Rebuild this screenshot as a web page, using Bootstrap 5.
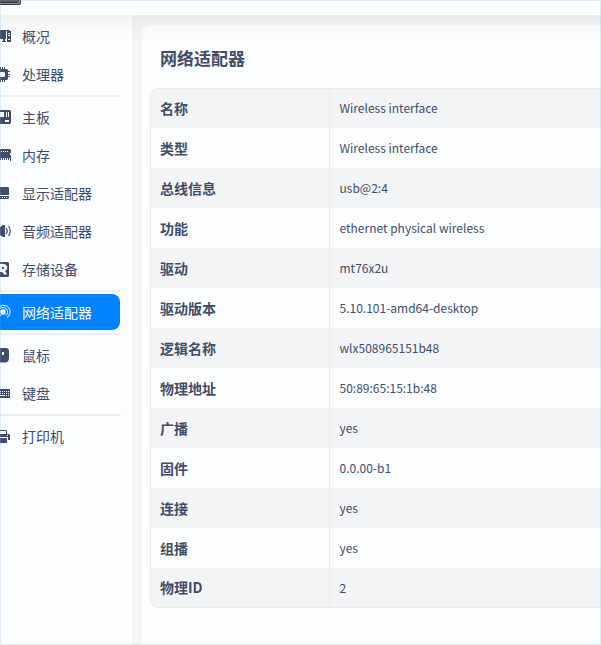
<!DOCTYPE html>
<html lang="zh-CN">
<head>
<meta charset="utf-8">
<meta name="viewport" content="width=device-width, initial-scale=1">
<title>设备管理器</title>
<link href="https://cdn.jsdelivr.net/npm/bootstrap@5.3.0/dist/css/bootstrap.min.css" rel="stylesheet">
<style>
:root { --ink: #414d68; --surface: #fbfdff; --shade: #f3f4f6; --rule: #e9ebed; }
body { font-family: "Noto Sans CJK SC", sans-serif; font-size: 14px; line-height: 20px; color: var(--ink); background: var(--shade); }
.window-frame { position: fixed; inset: 0; border: 1px solid rgba(120,170,230,.2); pointer-events: none; z-index: 5; }
.title-bar { height: 15px; background: var(--surface); }
.app-logo { display: block; width: 22px; height: 6px; }
.content-area { position: relative; }
.top-shade { position: absolute; inset: 0 0 auto 0; height: 22px; background: linear-gradient(rgba(0,0,0,.04), rgba(0,0,0,0)); pointer-events: none; }
.side-menu { width: 132px; flex: none; background: var(--surface); padding: 3px 12px 0 0; gap: 2px; }
.side-menu a { height: 36px; gap: 10px; color: var(--ink); border-radius: 0 8px 8px 0; padding: 0; white-space: nowrap; }
.side-menu a.active { background: #0081ff; color: #fff; }
.side-menu a span { padding-bottom: 1px; }
.side-menu svg { width: 12px; height: 18px; flex: none; fill: currentColor; }
.side-menu hr { height: 2px; margin: 1px -1px 0 0; border: 0; background: #eceeef; opacity: 1; }
.detail-panel { background: var(--surface); margin: 10px 0 0 10px; border-radius: 8px 0 0 0; padding: 19px 0 0 8px; min-width: 0; }
.detail-panel h1 { font-size: 17px; line-height: 28px; margin: 0 0 16px 10px; font-weight: 700; }
.info-box { border: 1px solid var(--rule); border-right: 0; border-radius: 8px 0 0 8px; overflow: hidden; }
.info-table { line-height: 20px; color: var(--ink); }
.info-table th, .info-table td { height: 40px; padding: 0 10px; vertical-align: middle; color: var(--ink); background: var(--surface); }
.info-table th { width: 178px; padding-left: 9px; padding-bottom: 1px; border-right: 1px solid var(--rule); font-weight: 700; }
.info-table td { font-size: 12px; }
.info-table tr:nth-child(odd) > * { background: var(--shade); }
.info-table tr:first-child > *, .info-table tr:last-child > * { height: 39px; }
.info-table tr:first-child > * { padding-bottom: 1px; }
</style>
<script src="https://cdn.jsdelivr.net/npm/bootstrap@5.3.0/dist/js/bootstrap.bundle.min.js"></script>
</head>
<body class="d-flex flex-column min-vh-100">
<header class="title-bar">
  <svg class="app-logo" viewBox="0 0 22 6" aria-hidden="true"><path d="M0 0H21V3Q21 5 19 5H0Z" fill="#34373b"/><path d="M0 0H18V2H0Z" fill="#55585c"/><path d="M0 3H18Q19 3 19 0H20V2.5Q20 4 18.5 4H0Z" fill="#96999c"/></svg>
</header>
<div class="content-area d-flex flex-grow-1">
  <nav class="side-menu nav flex-column flex-nowrap" aria-label="设备">
    <a class="nav-link d-flex align-items-center" href="#"><svg viewBox="0 0 12 18" aria-hidden="true"><path d="M0 3H9L10 4H6V12H0ZM2 14H6V15H2ZM3 12H5V14H3Z"/><path fill-rule="evenodd" d="M7 4H11V15H7ZM8 6V7H10V6ZM8 8V9H10V8ZM8 12V13H10V12Z"/></svg><span>概况</span></a>
    <a class="nav-link d-flex align-items-center" href="#"><svg viewBox="0 0 12 18" aria-hidden="true"><path fill-rule="evenodd" d="M0 4H7L8 5V14L7 15H0V12H4L5 11V8L4 7H0Z"/><path d="M0 2H1V4H0ZM2 2H3V4H2ZM4 2H5V4H4ZM0 15H1V17H0ZM2 15H3V17H2ZM4 15H5V17H4ZM8 6H10V7H8ZM8 9H10V10H8ZM8 11H10V12H8Z"/></svg><span>处理器</span></a>
    <hr>
    <a class="nav-link d-flex align-items-center" href="#"><svg viewBox="0 0 12 18" aria-hidden="true"><path fill-rule="evenodd" d="M0 2H10L11 3V15L10 16H0V9H4V4H0ZM6 4V9H7V4ZM8 4V9H9V4ZM5 12V14H9V12Z"/></svg><span>主板</span></a>
    <a class="nav-link d-flex align-items-center" href="#"><svg viewBox="0 0 12 18" aria-hidden="true"><path fill-rule="evenodd" d="M0 3H10L11 4V7H10V9H11V15H10V12H9V14H8V12H7V14H6V12H5V14H4V12H3V14H2V12H1V14H0ZM1 5V6H2V5ZM3 5V6H4V5ZM5 5V6H6V5ZM7 5V6H8V5Z"/></svg><span>内存</span></a>
    <a class="nav-link d-flex align-items-center" href="#"><svg viewBox="0 0 12 18" aria-hidden="true"><path fill-rule="evenodd" d="M0 3H8L9 4V14L8 15H0ZM0 11V12H9V11ZM2 13V14H3V13ZM4 13V14H5V13ZM6 13V14H7V13Z"/></svg><span>显示适配器</span></a>
    <a class="nav-link d-flex align-items-center" href="#"><svg viewBox="0 0 12 18" aria-hidden="true"><path d="M0 5L3 3H5V15H3L0 13Z"/><path d="M6 6Q8.500 9 6 12M8.500 4Q12 9 8.500 14" fill="none" stroke="currentColor" stroke-width="1.2"/></svg><span>音频适配器</span></a>
    <a class="nav-link d-flex align-items-center" href="#"><svg viewBox="0 0 12 18" aria-hidden="true"><path fill-rule="evenodd" d="M0 2H8L9 3V16L8 17H0V12H2L5 15L7 14L5 11Q8 9 7 6Q5 3 0 4ZM2 7V9H4V7Z"/></svg><span>存储设备</span></a>
    <hr>
    <a class="nav-link d-flex align-items-center active" href="#" aria-current="page"><svg viewBox="0 0 12 18" aria-hidden="true"><circle cx="3" cy="9" r="2.8"/><path d="M0 5.500A4.600 4.600 0 1 1 6 12.500M0 3.200A6.600 6.600 0 1 1 7 14.500" fill="none" stroke="currentColor"/><path d="M0 12L1 13" stroke="currentColor"/></svg><span>网络适配器</span></a>
    <hr>
    <a class="nav-link d-flex align-items-center" href="#"><svg viewBox="0 0 12 18" aria-hidden="true"><path fill-rule="evenodd" d="M0 2H7L9 4V12Q9 15 6 16.500H0ZM2 6V9H4V6Z"/></svg><span>鼠标</span></a>
    <a class="nav-link d-flex align-items-center" href="#"><svg viewBox="0 0 12 18" aria-hidden="true"><path fill-rule="evenodd" d="M0 5H10V14H0ZM0 7V8H1V7ZM2 7V8H3V7ZM4 7V8H5V7ZM6 7V8H7V7ZM8 7V8H9V7ZM0 9V10H1V9ZM2 9V10H3V9ZM4 9V10H5V9ZM6 9V10H7V9ZM8 9V10H9V9ZM0 11V12H5V11ZM6 11V12H7V11ZM8 11V12H9V11Z"/></svg><span>键盘</span></a>
    <hr>
    <a class="nav-link d-flex align-items-center" href="#"><svg viewBox="0 0 12 18" aria-hidden="true"><path fill-rule="evenodd" d="M0 3H6L7 4V7H9L10 8V13H8V10H0V7H6V4H0ZM7 8V9H8V8Z"/><path d="M0 11H7V16H0Z"/></svg><span>打印机</span></a>
  </nav>
  <main class="detail-panel flex-grow-1">
    <h1>网络适配器</h1>
    <div class="info-box">
      <table class="info-table table table-borderless mb-0">
        <tbody>
          <tr><th scope="row">名称</th><td>Wireless interface</td></tr>
          <tr><th scope="row">类型</th><td>Wireless interface</td></tr>
          <tr><th scope="row">总线信息</th><td>usb@2:4</td></tr>
          <tr><th scope="row">功能</th><td>ethernet physical wireless</td></tr>
          <tr><th scope="row">驱动</th><td>mt76x2u</td></tr>
          <tr><th scope="row">驱动版本</th><td>5.10.101-amd64-desktop</td></tr>
          <tr><th scope="row">逻辑名称</th><td>wlx508965151b48</td></tr>
          <tr><th scope="row">物理地址</th><td>50:89:65:15:1b:48</td></tr>
          <tr><th scope="row">广播</th><td>yes</td></tr>
          <tr><th scope="row">固件</th><td>0.0.00-b1</td></tr>
          <tr><th scope="row">连接</th><td>yes</td></tr>
          <tr><th scope="row">组播</th><td>yes</td></tr>
          <tr><th scope="row">物理ID</th><td>2</td></tr>
        </tbody>
      </table>
    </div>
  </main>
  <div class="top-shade"></div>
</div>
<div class="window-frame"></div>
</body>
</html>
